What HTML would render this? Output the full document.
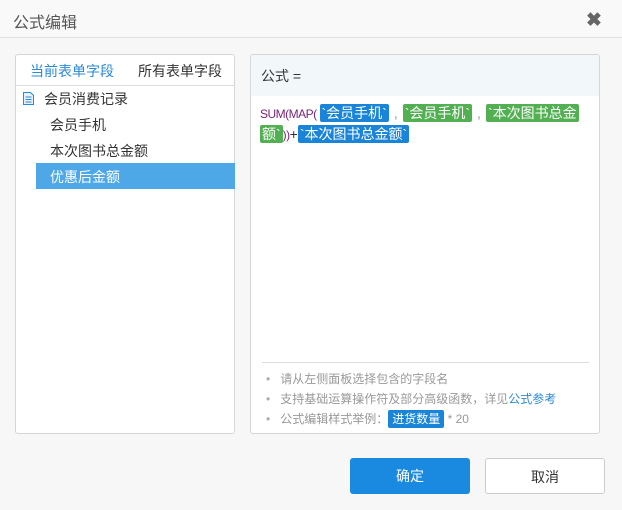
<!DOCTYPE html>
<html><head><meta charset="utf-8"><style>
*{margin:0;padding:0;box-sizing:border-box}
body{width:622px;height:510px;background:#f7f7f7;font-family:"Liberation Sans","Noto Sans CJK SC",sans-serif;font-size:14px;color:#333;position:relative;overflow:hidden}
.hd{position:absolute;left:0;top:0;width:622px;height:38px;border-bottom:1px solid #e2e2e2;background:#f9f9f9}
.hd .t{position:absolute;left:13px;top:9px;font-size:16px;color:#555}
.x{position:absolute;left:586px;top:12px;font-size:19px;font-weight:bold;color:#666;line-height:18px}
.lp{position:absolute;left:15px;top:54px;width:220px;height:380px;background:#fff;border:1px solid #d6d6d6;border-radius:3px}
.tabs{height:31px;border-bottom:1px solid #ddd;position:relative}
.tabs span{position:absolute;top:6px;font-size:14px}
.it{position:absolute;font-size:14px}
.sel{position:absolute;left:20px;top:108px;width:199px;height:26px;background:#4ea7e6}
.rp{position:absolute;left:250px;top:54px;width:350px;height:380px;background:#fff;border:1px solid #d6d6d6;border-radius:3px;overflow:hidden}
.rh{height:41px;background:#f2f7fa;padding:11px 0 0 10px;font-size:14px}
.code{position:absolute;left:9px;top:48px;width:335px;font-family:"Liberation Sans","Noto Sans CJK SC",sans-serif;font-size:14px;line-height:20px;color:#333}
.f{color:#7a1f7a;font-family:"Liberation Sans",sans-serif;font-size:12px;letter-spacing:-0.5px}
.b{background:#1a85d8;color:#fff;border-radius:2px;padding:1px 2px}
.g{background:#52b052;color:#fff;border-radius:2px;padding:1px 2px}
.c{margin:0 5px;color:#999}
.sep{position:absolute;left:11px;top:307px;width:327px;border-top:1px solid #ddd}
.tips{position:absolute;left:15px;top:314px;font-size:12px;color:#999;line-height:20px}
.tips div:before{content:"•";margin-right:10px;color:#aaa}
.btn{position:absolute;top:458px;width:120px;height:36px;border-radius:3px;text-align:center;line-height:36px;font-size:14px}
</style></head><body>
<div class="hd"><span class="t">公式编辑</span><span class="x">✖</span></div>
<div class="lp">
 <div class="tabs"><span style="left:14px;color:#2a8ad4">当前表单字段</span><span style="left:122px">所有表单字段</span></div>
 <svg style="position:absolute;left:7px;top:37px" width="11" height="13" viewBox="0 0 11 13"><path d="M0.5 0.5h7l3 3v9h-10z" fill="#e7f1fb" stroke="#2a8ad4"/><path d="M2.5 5h6M2.5 7.5h6M2.5 10h6" stroke="#2a8ad4"/></svg>
 <span class="it" style="left:28px;top:34px">会员消费记录</span>
 <span class="it" style="left:34px;top:60px">会员手机</span>
 <span class="it" style="left:34px;top:86px">本次图书总金额</span>
 <div class="sel"></div>
 <span class="it" style="left:34px;top:112px;color:#fff">优惠后金额</span>
</div>
<div class="rp">
 <div class="rh">公式 =</div>
 <div class="code"><span class="f">SUM(MAP( </span><span class="b">`会员手机`</span><span class="c">,</span><span class="g">`会员手机`</span><span class="c">,</span><span class="g">`本次图书总金</span><br><span class="g">额`</span><span class="f">))</span>+<span class="b">`本次图书总金额`</span></div>
 <div class="sep"></div>
 <div class="tips">
  <div>请从左侧面板选择包含的字段名</div>
  <div>支持基础运算操作符及部分高级函数，详见<span style="color:#2a8ad4">公式参考</span></div>
  <div>公式编辑样式举例：<span class="b" style="padding:2px 4px;font-size:12px">进货数量</span> * 20</div>
 </div>
</div>
<div class="btn" style="left:350px;background:#1a8ae0;color:#fff">确定</div>
<div class="btn" style="left:485px;background:#fff;border:1px solid #ccc">取消</div>
</body></html>
